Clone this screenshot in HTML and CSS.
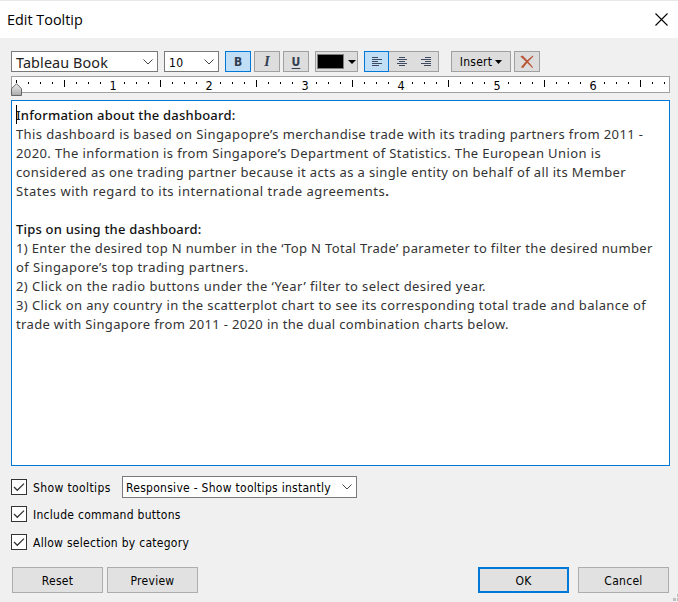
FILE: index.html
```
<!DOCTYPE html>
<html lang="en">
<head>
<meta charset="utf-8">
<title>Edit Tooltip</title>
<link rel="stylesheet" href="styles.css">
</head>
<body>
<div class="dialog">
  <header class="titlebar">
    <span class="title">Edit Tooltip</span>
    <svg class="close" width="13" height="13" viewBox="0 0 13 13"><path d="M.5.5l12 12M12.5.5l-12 12" fill="none" stroke="#000" stroke-width="1.1"/></svg>
  </header>
  <div class="toolbar">
    <div class="combo font-combo"><span>Tableau Book</span><svg width="10" height="6" viewBox="0 0 10 6"><path d="M.5.5L5 5 9.500.5" fill="none" stroke="#444"/></svg></div>
    <div class="combo size-combo"><span>10</span><svg width="10" height="6" viewBox="0 0 10 6"><path d="M.5.5L5 5 9.500.5" fill="none" stroke="#444"/></svg></div>
    <div class="tool on bold">B</div>
    <div class="tool italic">I</div>
    <div class="tool underline">U</div>
    <div class="tool color"><span class="swatch"></span><svg width="8" height="4" viewBox="0 0 8 4"><path d="M0 0h8L4 4z"/></svg></div>
    <div class="align">
      <div class="tool on"><svg width="10" height="9" viewBox="0 0 10 9"><path d="M0 .5h6M0 2.500h10M0 4.500h6M0 6.500h10M0 8.500h7" stroke="#3d4a60"/></svg></div>
      <div class="tool"><svg width="10" height="9" viewBox="0 0 10 9"><path d="M2 .5h6M0 2.500h10M2 4.500h6M0 6.500h10M2 8.500h6" stroke="#3d4a60"/></svg></div>
      <div class="tool"><svg width="10" height="9" viewBox="0 0 10 9"><path d="M4 .5h6M0 2.500h10M4 4.500h6M0 6.500h10M3 8.500h7" stroke="#3d4a60"/></svg></div>
    </div>
    <div class="tool insert"><span>Insert</span><svg width="7" height="4" viewBox="0 0 7 4"><path d="M0 0h7L3.500 4z"/></svg></div>
    <div class="tool clear"><svg width="14" height="14" viewBox="0 0 14 14"><path d="M.3 1.600L2.600.5Q6.500 4.200 13 12.200L12.300 13Q7 7.500 .3 1.600zM12.800.6l.6.8Q8 6 3.200 13L.8 12.200Q6 5.600 12.800.6z" fill="#bb5638"/></svg></div>
  </div>
  <div class="ruler-box">
    <svg class="ruler" width="657" height="15" viewBox="0 0 657 15">
      <defs>
        <pattern id="inch" x="4" width="96" height="15" patternUnits="userSpaceOnUse"><path d="M12.500 5v2M24.500 5v2M36.500 5v2M48.500 3v7M60.500 5v2M72.500 5v2M84.500 5v2" stroke="#000"/></pattern>
      </defs>
      <rect x="4" width="653" height="15" fill="url(#inch)"/>
      <path d="M4.500 3v3" stroke="#000"/>
      <g class="nums"><text x="101" y="13">1</text><text x="197" y="13">2</text><text x="293" y="13">3</text><text x="389" y="13">4</text><text x="485" y="13">5</text><text x="581" y="13">6</text></g>
    </svg>
    <svg class="thumb" width="11" height="13" viewBox="0 0 11 13"><defs><linearGradient id="g" x2="0" y2="1"><stop offset="0" stop-color="#eee"/><stop offset="1" stop-color="#aaa"/></linearGradient></defs><path d="M5.500.7l5 5v6.800H.5V5.700z" fill="url(#g)" stroke="#666"/></svg>
  </div>
  <div class="editor">
    <span class="caret"></span>
    <div class="line strong l1">Information about the dashboard:</div>
    <div class="line l2">This dashboard is based on Singapopre’s merchandise trade with its trading partners from 2011 -</div>
    <div class="line l3">2020. The information is from Singapore’s Department of Statistics. The European Union is</div>
    <div class="line l4">considered as one trading partner because it acts as a single entity on behalf of all its Member</div>
    <div class="line l5">States with regard to its international trade agreements<b>.</b></div>
    <div class="line"></div>
    <div class="line strong l7">Tips on using the dashboard:</div>
    <div class="line l8">1) Enter the desired top N number in the ‘Top N Total Trade’ parameter to filter the desired number</div>
    <div class="line l9">of Singapore’s top trading partners.</div>
    <div class="line l10">2) Click on the radio buttons under the ‘Year’ filter to select desired year.</div>
    <div class="line l11">3) Click on any country in the scatterplot chart to see its corresponding total trade and balance of</div>
    <div class="line l12">trade with Singapore from 2011 - 2020 in the dual combination charts below.</div>
  </div>
  <div class="options">
    <div class="option first">
      <svg class="check" width="16" height="16" viewBox="0 0 16 16"><rect x=".5" y=".5" width="15" height="15" fill="#fff" stroke="#333"/><path d="M3 8l3.300 3.300L13 4.600" fill="none" stroke="#333" stroke-width="1.300"/></svg>
      <span class="label wide">Show tooltips</span>
      <div class="combo mode-combo"><span>Responsive - Show tooltips instantly</span><svg width="10" height="6" viewBox="0 0 10 6"><path d="M.5.5L5 5 9.500.5" fill="none" stroke="#444"/></svg></div>
    </div>
    <div class="option second">
      <svg class="check" width="16" height="16" viewBox="0 0 16 16"><rect x=".5" y=".5" width="15" height="15" fill="#fff" stroke="#333"/><path d="M3 8l3.300 3.300L13 4.600" fill="none" stroke="#333" stroke-width="1.300"/></svg>
      <span class="label">Include command buttons</span>
    </div>
    <div class="option third">
      <svg class="check" width="16" height="16" viewBox="0 0 16 16"><rect x=".5" y=".5" width="15" height="15" fill="#fff" stroke="#333"/><path d="M3 8l3.300 3.300L13 4.600" fill="none" stroke="#333" stroke-width="1.300"/></svg>
      <span class="label">Allow selection by category</span>
    </div>
  </div>
  <footer class="buttons">
    <div class="button">Reset</div>
    <div class="button preview">Preview</div>
    <div class="button ok">OK</div>
    <div class="button cancel">Cancel</div>
  </footer>
  <svg class="grip" width="5" height="8" viewBox="0 0 5 8"><path d="M0 4h3v3H0zM4 4h1v3H4zM4 0h1v3H4z" fill="#bfbfbf"/></svg>
</div>
</body>
</html>
```
FILE: styles.css
```
* { box-sizing: border-box; }
body { margin: 0; }
svg { display: block; flex: none; }

.dialog {
  position: relative;
  width: 678px;
  height: 602px;
  overflow: hidden;
  background: #f0f0f0;
  color: #000;
  font: 12px/16px "DejaVu Sans Condensed", "DejaVu Sans", sans-serif;
  letter-spacing: 0.28px;
  white-space: nowrap;
}

.titlebar {
  display: flex;
  justify-content: space-between;
  height: 38px;
  padding: 10px 10px 0 7px;
  background: #fff;
  border-top: 1px solid #e8e8e8;
}
.title { font: 14.4px/18px "Open Sans", sans-serif; letter-spacing: 0; }
.close { margin-top: 2px; }

.toolbar { display: flex; height: 21px; margin: 13px 11px 0; }

.combo {
  display: flex;
  align-items: center;
  justify-content: space-between;
  background: #fff;
  border: 1px solid #7a7a7a;
  padding: 0 4px;
}
.combo span { padding-top: 2px; }
.font-combo { width: 147px; margin-right: 6px; }
.font-combo span { color: #222; font: 14.4px/18px "Noto Sans", sans-serif; letter-spacing: 0.1px; }
.size-combo { width: 55px; margin-right: 6px; }

.tool {
  display: flex;
  align-items: center;
  justify-content: center;
  width: 26px;
  margin-right: 3px;
  background: #ddd;
  border: 1px solid #a0a0a0;
}
.tool.on { background: #c0def5; border-color: #0078d7; }
.bold, .italic, .underline { color: #333f52; letter-spacing: 0; }
.bold { font-weight: 700; }
.italic { font: italic 700 14px/16px "Liberation Serif", serif; }
.underline { margin-right: 6px; font-weight: 700; text-decoration: underline; text-underline-offset: 2px; }
.color { width: 43px; gap: 4px; margin-right: 6px; }
.swatch { width: 27px; height: 15px; background: #000; border: 1px solid #808080; }
.align { display: flex; margin-right: 12px; }
.align .tool { width: 25px; margin: 0; border-left-width: 0; border-right-width: 0; }
.align .tool:first-child { border-left-width: 1px; border-right-width: 1px; }
.align .tool:last-child { border-right-width: 1px; }
.insert { width: 60px; gap: 3px; }
.clear { margin: 0; }

.ruler-box {
  position: relative;
  width: 659px;
  height: 17px;
  margin: 4px 0 0 11px;
  background: #fff;
  border: 1px solid #a0a0a0;
}
.nums { font: 12.5px "DejaVu Sans Condensed", sans-serif; text-anchor: middle; letter-spacing: 0; }
.thumb { position: absolute; left: -1px; top: 6px; }

.editor {
  position: relative;
  width: 659px;
  height: 366px;
  margin: 7px 0 0 11px;
  padding: 5px 0 0 4px;
  background: #fff;
  border: 1px solid #0078d7;
  color: #333;
  font: 13px/19px "Noto Sans", sans-serif;
}
.caret { position: absolute; left: 4px; top: 4px; width: 1px; height: 19px; background: #000; }
.line { height: 19px; }
.strong { color: #111; font-weight: 500; }
.l1 { letter-spacing: 0.21px; }
.l2 { letter-spacing: 0.385px; }
.l3 { letter-spacing: 0.392px; }
.l4 { letter-spacing: 0.375px; }
.l5 { letter-spacing: 0.53px; }
.l7 { letter-spacing: 0.2px; }
.l8 { letter-spacing: 0.355px; }
.l9 { letter-spacing: 0.44px; }
.l10 { letter-spacing: 0.43px; }
.l11 { letter-spacing: 0.389px; }
.l12 { letter-spacing: 0.345px; }

.options { padding: 10px 11px 0; }
.option { display: flex; align-items: center; gap: 6px; }
.label { position: relative; top: 1px; }
.first { height: 22px; }
.second { height: 16px; margin-top: 8px; }
.third { height: 16px; margin-top: 12px; }
.wide { width: 83px; letter-spacing: 0.38px; }
.mode-combo { width: 235px; height: 22px; padding: 0 4px 0 3px; }

.buttons { display: flex; height: 27px; margin: 17px 9px 0 12px; }
.button {
  display: flex;
  align-items: center;
  justify-content: center;
  width: 91px;
  height: 26px;
  padding-top: 2px;
  background: #e1e1e1;
  border: 1px solid #adadad;
}
.preview { margin-left: 4px; }
.ok { margin-left: auto; border: 2px solid #0078d7; }
.cancel { margin-left: 9px; }
.grip { position: absolute; right: 0; bottom: 0; }
```
